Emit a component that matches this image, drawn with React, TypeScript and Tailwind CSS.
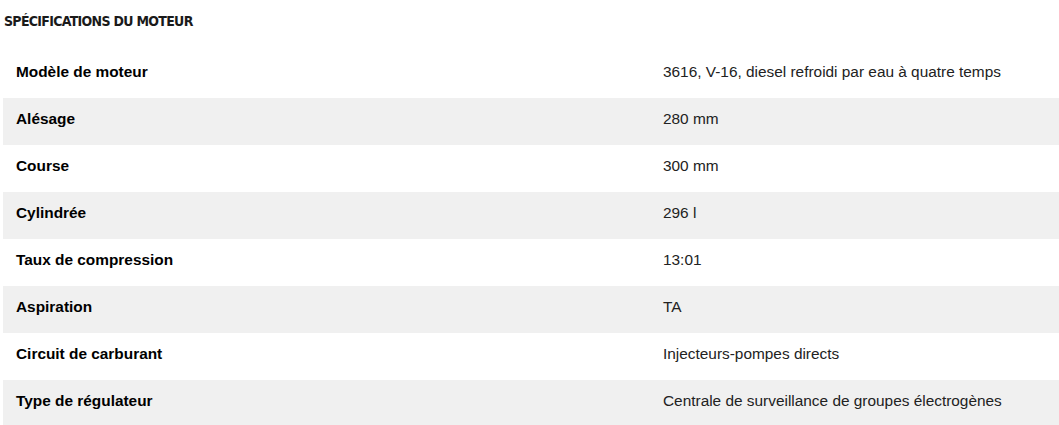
const rows: [string, string][] = [
  ['Modèle de moteur', '3616, V-16, diesel refroidi par eau à quatre temps'],
  ['Alésage', '280 mm'],
  ['Course', '300 mm'],
  ['Cylindrée', '296 l'],
  ['Taux de compression', '13:01'],
  ['Aspiration', 'TA'],
  ['Circuit de carburant', 'Injecteurs-pompes directs'],
  ['Type de régulateur', 'Centrale de surveillance de groupes électrogènes'],
];

export default function App() {
  return (
    <div className="w-[1059px] h-[425px] overflow-hidden bg-white font-[family-name:'Liberation_Sans',Arial,sans-serif]">
      <h2 className="pl-[4px] pt-[11px] h-[51px] text-[14px] tracking-[-0.7px] font-bold uppercase text-[#1a1a1a] font-[family-name:'Liberation_Sans_Narrow','DejaVu_Sans_Condensed',sans-serif]">
        Spécifications du moteur
      </h2>
      <div className="ml-[3px]">
        {rows.map(([label, value], i) => (
          <div
            key={label}
            className={`flex items-center h-[47px] pb-[6px] ${i % 2 === 1 ? 'bg-[#f0f0f0]' : 'bg-white'}`}
          >
            <div className="w-[660px] pl-[13px] text-[15.4px] font-bold text-black">{label}</div>
            <div className="flex-1 text-[15.4px] text-[#222]">{value}</div>
          </div>
        ))}
      </div>
    </div>
  );
}
